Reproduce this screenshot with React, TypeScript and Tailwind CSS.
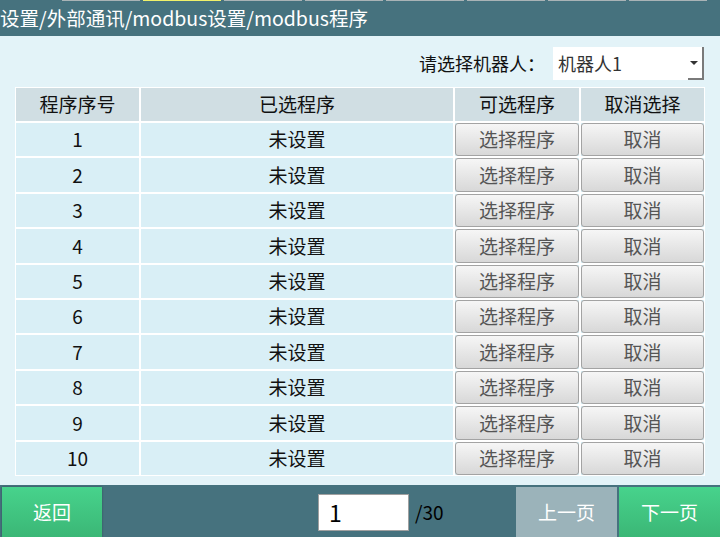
import React from "react";

const rows = [1, 2, 3, 4, 5, 6, 7, 8, 9, 10];
const segs = [0, 1, 2, 3, 4, 5, 6, 7];

export default function App() {
  const font = { fontFamily: '"Noto Sans CJK SC", "Noto Sans", sans-serif' };
  return (
    <div className="w-[720px] h-[537px] flex flex-col bg-[#e3f3f8] overflow-hidden" style={font}>
      {/* title bar */}
      <div className="h-[36px] bg-[#46727e] flex flex-col shrink-0">
        <div className="h-[1px] flex pl-[62px] gap-[3px]">
          {segs.map((i) => (
            <div key={i} className={`w-[78px] h-[1px] ${i === 1 ? "bg-[#f0f06a]" : "bg-[#a9b3b6]"}`} />
          ))}
        </div>
        <div className="flex-1 flex items-center text-white text-[19.5px] leading-none pb-[2px]">
          设置/外部通讯/modbus设置/modbus程序
        </div>
      </div>

      {/* body */}
      <div className="flex-1 flex flex-col px-[15px] pt-[11px]">
        <div className="flex items-center justify-end h-[33px] pr-[1px]">
          <span className="text-[18px] text-[#111] mr-[8px]">请选择机器人：</span>
          <div className="relative w-[151px] h-[33px] bg-white flex items-center pl-[5px] text-[18px] text-[#333]">
            机器人1
            <div className="absolute right-0 top-0 w-[2px] h-[33px] bg-[#7a7a7a]" />
            <div className="absolute right-0 bottom-0 w-[16px] h-[2px] bg-[#7a7a7a]" />
            <div className="absolute right-[6px] top-[14px] w-0 h-0 border-l-[4px] border-r-[4px] border-t-[4px] border-l-transparent border-r-transparent border-t-[#333]" />
          </div>
        </div>

        <div className="mt-[7px] bg-white p-[1px] grid grid-cols-[123px_312px_124px_123px] gap-[2px] text-[19px] text-[#111]">
          {["程序序号", "已选程序", "可选程序", "取消选择"].map((h) => (
            <div key={h} className="h-[33px] bg-[#d0dee3] flex items-center justify-center">
              {h}
            </div>
          ))}
          {rows.map((r) => (
            <React.Fragment key={r}>
              <div className="h-[33.4px] bg-[#d9eff6] flex items-center justify-center">{r}</div>
              <div className="h-[33.4px] bg-[#d9eff6] flex items-center justify-center">未设置</div>
              <div className="h-[33.4px] bg-[#d9eff6] flex">
                <div className="flex-1 rounded-[3px] border border-[#a3a3a3] bg-gradient-to-b from-[#f6f6f6] to-[#d8d8d8] flex items-center justify-center text-[#555]">
                  选择程序
                </div>
              </div>
              <div className="h-[33.4px] bg-[#d9eff6] flex">
                <div className="flex-1 rounded-[3px] border border-[#a3a3a3] bg-gradient-to-b from-[#f6f6f6] to-[#d8d8d8] flex items-center justify-center text-[#555]">
                  取消
                </div>
              </div>
            </React.Fragment>
          ))}
        </div>
      </div>

      {/* footer */}
      <div className="h-[52px] bg-[#46727e] flex items-end pl-[2px] shrink-0">
        <div className="w-[100px] h-[50px] bg-gradient-to-b from-[#47d38c] to-[#3bb776] flex items-center justify-center text-white text-[19px] shadow-[0_0_2px_rgba(0,0,0,0.3)]">
          返回
        </div>
        <div className="self-center ml-[216px] mt-[2px] w-[91px] h-[37px] bg-white border border-[#a0a0a0] flex items-center pl-[10px] text-[23px] text-black">
          1
        </div>
        <span className="self-center mt-[2px] ml-[6px] text-[19px] text-black">/30</span>
        <div className="ml-auto w-[101px] h-[50px] bg-[#9bb3ba] flex items-center justify-center text-white text-[19px]">
          上一页
        </div>
        <div className="ml-[2px] w-[101px] h-[50px] bg-gradient-to-b from-[#47d38c] to-[#3bb776] flex items-center justify-center text-white text-[19px]">
          下一页
        </div>
      </div>
    </div>
  );
}
